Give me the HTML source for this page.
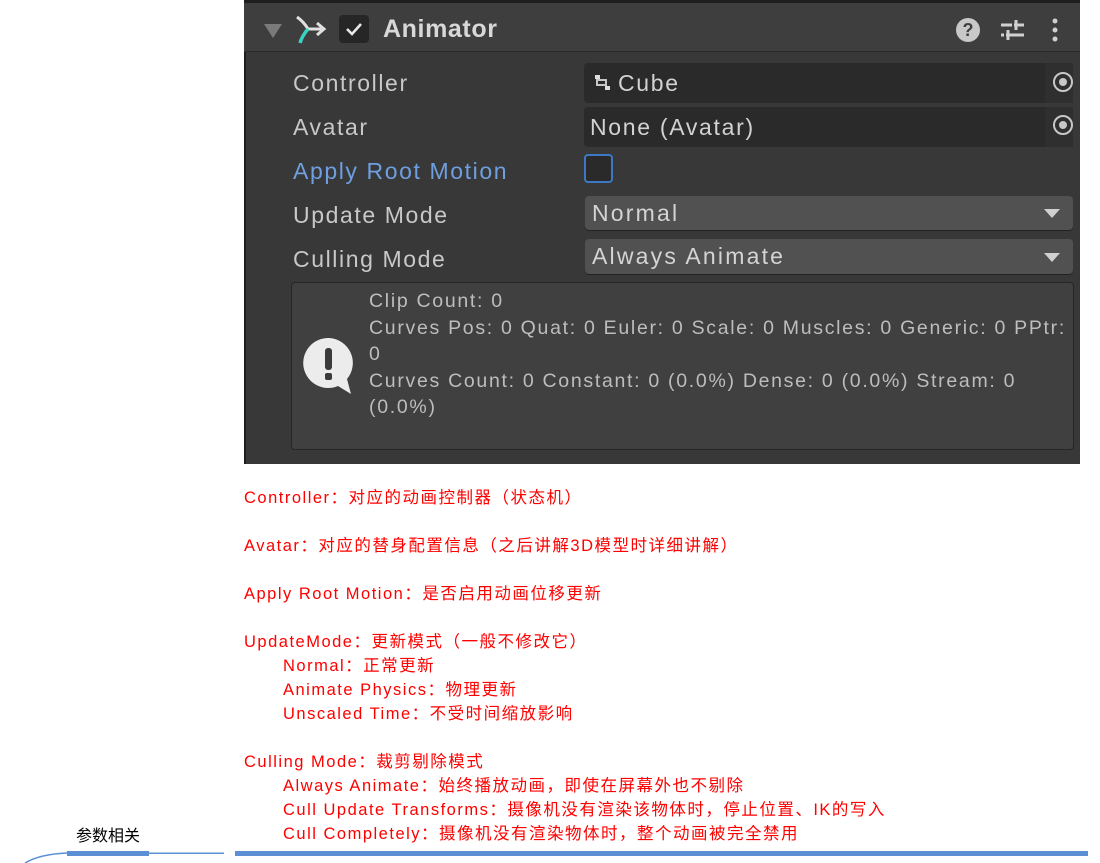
<!DOCTYPE html>
<html><head><meta charset="utf-8"><style>
*{margin:0;padding:0;box-sizing:border-box}
body{width:1100px;height:863px;background:#fff;position:relative;overflow:hidden;font-family:"Liberation Sans","Noto Sans CJK SC",sans-serif}
.a{position:absolute;white-space:nowrap}
.panel{left:244px;top:0;width:836px;height:464px;background:#383838;border-top:3px solid #1e1e1e;border-left:2px solid #1e1e1e}
.hdr{left:244px;top:3px;width:836px;height:49px;background:#3e3e3e;border-bottom:1px solid #2a2a2a}
.lbl{color:#c8c8c8;font-size:23px;left:293px;letter-spacing:1.6px}
.fld{background:#2a2a2a;border-radius:4px;color:#d2d2d2;font-size:23px;padding-left:6px;line-height:40px;letter-spacing:1.7px}
.dd{background:#515151;border-radius:4px;color:#d4d4d4;font-size:23px;padding-left:7px;line-height:34px;box-shadow:0 1px 0 #232323;letter-spacing:2.2px}
.tri{width:0;height:0;border-left:8px solid transparent;border-right:8px solid transparent;border-top:9px solid #d0d0d0}
.help{left:291px;top:282px;width:783px;height:168px;background:#404040;border:1px solid #262626;border-radius:4px}
.ht{left:369px;color:#bdbdbd;font-size:19.5px;line-height:26.5px;letter-spacing:1.7px}
.r{color:#f00;font-size:16.5px;position:absolute;white-space:nowrap;letter-spacing:1.5px}
</style></head><body>
<div class="a panel"></div>
<div class="a hdr"></div>
<div class="a tri" style="left:264px;top:24px;border-top-color:#7a7a7a;border-left-width:9px;border-right-width:9px;border-top-width:14px"></div>
<svg class="a" style="left:294px;top:14px" width="34" height="32" viewBox="0 0 34 32"><path d="M3 3 Q10 8 14 15 L30 15 M23 9 L30 15 L23 21" stroke="#e0e0e0" stroke-width="3" fill="none"/><path d="M14 15 Q8 22 6 29" stroke="#3ad3c0" stroke-width="3.5" fill="none"/></svg>
<div class="a" style="left:339px;top:15px;width:30px;height:28px;background:#262626;border-radius:4px"></div>
<svg class="a" style="left:343px;top:19px" width="22" height="20"><path d="M4 10 L9 15 L18 5" stroke="#e8e8e8" stroke-width="2.6" fill="none"/></svg>
<div class="a" style="left:383px;top:15px;color:#d8d8d8;font-size:25px;font-weight:bold;letter-spacing:0.6px">Animator</div>
<div class="a" style="left:956px;top:18px;width:24px;height:24px;border-radius:50%;background:#c8c8c8;color:#3e3e3e;font-size:18px;font-weight:bold;text-align:center;line-height:24px">?</div>
<svg class="a" style="left:1000px;top:18px" width="24" height="24"><path d="M1 7h24M1 17h24M16 2v10M8 12v10" stroke="#d0d0d0" stroke-width="3" fill="none"/><path d="M12 7h2M4 17h2" stroke="#3e3e3e" stroke-width="3"/></svg>
<svg class="a" style="left:1050px;top:17px" width="10" height="26"><circle cx="5" cy="4" r="2.5" fill="#d0d0d0"/><circle cx="5" cy="13" r="2.5" fill="#d0d0d0"/><circle cx="5" cy="22" r="2.5" fill="#d0d0d0"/></svg>

<div class="a lbl" style="top:70px">Controller</div>
<div class="a lbl" style="top:114px">Avatar</div>
<div class="a lbl" style="top:158px;color:#6e9fe0">Apply Root Motion</div>
<div class="a lbl" style="top:202px">Update Mode</div>
<div class="a lbl" style="top:246px">Culling Mode</div>

<div class="a fld" style="left:584px;top:63px;width:489px;height:40px;padding-left:34px">Cube</div>
<svg class="a" style="left:594px;top:74px" width="18" height="18"><path d="M3 3 L3 11 L13 11 M3 6 L12 6 L12 14" stroke="#c8c8c8" stroke-width="2" fill="none"/><rect x="1" y="1" width="5" height="4" fill="#ddd"/><rect x="11" y="12" width="5" height="4" fill="#ddd"/></svg>
<div class="a fld" style="left:584px;top:107px;width:489px;height:40px">None (Avatar)</div>
<div class="a" style="left:1045px;top:63px;width:28px;height:40px;background:#2f2f2f"></div>
<div class="a" style="left:1045px;top:107px;width:28px;height:40px;background:#2f2f2f"></div>
<div class="a" style="left:1053px;top:72px;width:20px;height:20px;border:2.5px solid #c8c8c8;border-radius:50%"></div>
<div class="a" style="left:1059px;top:78px;width:8px;height:8px;background:#c8c8c8;border-radius:50%"></div>
<div class="a" style="left:1053px;top:115px;width:20px;height:20px;border:2.5px solid #c8c8c8;border-radius:50%"></div>
<div class="a" style="left:1059px;top:121px;width:8px;height:8px;background:#c8c8c8;border-radius:50%"></div>

<div class="a" style="left:584px;top:154px;width:29px;height:29px;background:#2a2a2a;border:2px solid #3c78c4;border-radius:4px"></div>
<div class="a dd" style="left:585px;top:196px;width:488px;height:34px">Normal</div>
<div class="a tri" style="left:1044px;top:209px"></div>
<div class="a dd" style="left:585px;top:239px;width:488px;height:35px">Always Animate</div>
<div class="a tri" style="left:1044px;top:253px"></div>

<div class="a help"></div>
<svg class="a" style="left:302px;top:336px" width="56" height="62"><path d="M27 2 A25 25 0 1 0 36 50 L49 58 L45 43 A25 25 0 0 0 27 2Z" fill="#ececec"/><rect x="23" y="12" width="7" height="22" rx="3" fill="#3a3a3a"/><rect x="23" y="37" width="7" height="7" rx="2" fill="#3a3a3a"/></svg>
<div class="a ht" style="top:288px">Clip Count: 0<br>Curves Pos: 0 Quat: 0 Euler: 0 Scale: 0 Muscles: 0 Generic: 0 PPtr:<br>0<br>Curves Count: 0 Constant: 0 (0.0%) Dense: 0 (0.0%) Stream: 0<br>(0.0%)</div>

<div class="r" style="left:244px;top:484px">Controller：对应的动画控制器（状态机）</div>
<div class="r" style="left:244px;top:532px">Avatar：对应的替身配置信息（之后讲解3D模型时详细讲解）</div>
<div class="r" style="left:244px;top:580px">Apply Root Motion：是否启用动画位移更新</div>
<div class="r" style="left:244px;top:628px">UpdateMode：更新模式（一般不修改它）</div>
<div class="r" style="left:283px;top:652px">Normal：正常更新</div>
<div class="r" style="left:283px;top:676px">Animate Physics：物理更新</div>
<div class="r" style="left:283px;top:700px">Unscaled Time：不受时间缩放影响</div>
<div class="r" style="left:244px;top:748px">Culling Mode：裁剪剔除模式</div>
<div class="r" style="left:283px;top:772px">Always Animate：始终播放动画，即使在屏幕外也不剔除</div>
<div class="r" style="left:283px;top:796px">Cull Update Transforms：摄像机没有渲染该物体时，停止位置、IK的写入</div>
<div class="r" style="left:283px;top:820px">Cull Completely：摄像机没有渲染物体时，整个动画被完全禁用</div>

<div class="a" style="left:76px;top:822px;font-size:16px;color:#000">参数相关</div>
<svg class="a" style="left:0;top:845px" width="1100" height="18"><path d="M25 18 Q40 9 68 8" stroke="#5b8fd6" stroke-width="1.5" fill="none"/><rect x="67" y="6" width="82" height="5" fill="#5b8fd6"/><rect x="149" y="7.5" width="75" height="1.5" fill="#5b8fd6"/><rect x="235" y="6" width="853" height="5" fill="#5b8fd6"/></svg>
</body></html>
